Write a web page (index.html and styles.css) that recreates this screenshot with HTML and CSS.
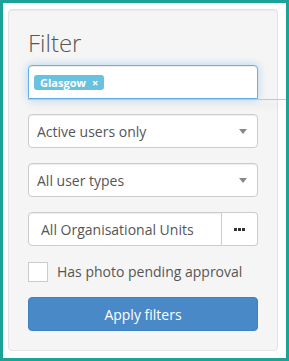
FILE: index.html
```html
<!DOCTYPE html>
<html lang="en">
<head>
    <meta charset="UTF-8">
    <meta name="viewport" content="width=device-width, initial-scale=1.0">
    <title>Filter</title>
    <link rel="stylesheet" href="styles.css">
</head>
<body>
    <div class="well">
        <h3 class="title">Filter</h3>
        <form class="filter-form">
            <div class="tag-input">
                <span class="tag">Glasgow <span class="tag-remove">&times;</span></span>
                <div class="tag-dropdown"></div>
            </div>
            <div class="select-wrap">
                <select class="field">
                    <option>Active users only</option>
                    <option>Inactive users only</option>
                </select>
            </div>
            <div class="select-wrap">
                <select class="field">
                    <option>All user types</option>
                </select>
            </div>
            <div class="input-group">
                <input class="field" type="text" value="All Organisational Units" readonly>
                <button type="button" class="btn-more">
                    <svg width="11" height="3" viewBox="0 0 11 3">
                        <rect x="0" y="0" width="3" height="3" fill="#333"/>
                        <rect x="4" y="0" width="3" height="3" fill="#333"/>
                        <rect x="8" y="0" width="3" height="3" fill="#333"/>
                    </svg>
                </button>
            </div>
            <label class="check">
                <input type="checkbox">
                <span>Has photo pending approval</span>
            </label>
            <button type="button" class="btn-apply">Apply filters</button>
        </form>
    </div>
</body>
</html>
```

FILE: styles.css
```css
* {
    box-sizing: border-box;
}
body {
    margin: 0;
    width: 289px;
    height: 361px;
    padding: 6px 5px 0 5px;
    border: 3px solid #1aa396;
    background-color: #FFFFFF;
    font-family: "Open Sans", Arial, sans-serif;
    font-size: 14px;
    color: #555555;
    overflow: hidden;
}
.well {
    width: 270px;
    padding: 19px;
    background-color: #f5f5f5;
    border: 1px solid #e3e3e3;
    border-radius: 4px;
    box-shadow: inset 0 1px 1px rgba(0, 0, 0, 0.05);
}
.title {
    margin: 0 0 9px 0;
    font-size: 24px;
    line-height: 27px;
    font-weight: 300;
    color: #555555;
}
.filter-form {
    display: flex;
    flex-direction: column;
    gap: 15px;
}
.tag-input {
    position: relative;
    height: 34px;
    padding: 6px 5px;
    background-color: #FFFFFF;
    border: 1px solid #66afe9;
    border-radius: 4px 4px 0 0;
    box-shadow: inset 0 1px 1px rgba(0, 0, 0, 0.075), 0 0 8px rgba(102, 175, 233, 0.5);
}
.tag {
    display: inline-flex;
    align-items: center;
    gap: 6px;
    height: 15px;
    padding: 0 6px 0 6px;
    background-color: #68c2df;
    border-radius: 3px;
    color: #FFFFFF;
    font-size: 11px;
    font-weight: 700;
}
.tag-remove {
    font-size: 11px;
}
.tag-dropdown {
    position: absolute;
    top: 33px;
    left: -1px;
    width: 262px;
    height: 1px;
    background-color: #c6c6c6;
    box-shadow: 0 5px 9px rgba(0, 0, 0, 0.18);
}
.select-wrap {
    position: relative;
}
.select-wrap::after {
    content: "";
    position: absolute;
    right: 11px;
    top: 15px;
    border-left: 4px solid transparent;
    border-right: 4px solid transparent;
    border-top: 5px solid #888888;
}
.field {
    display: block;
    width: 100%;
    height: 34px;
    padding: 0 12px;
    font-family: "Open Sans", Arial, sans-serif;
    font-size: 14px;
    color: #555555;
    background-color: #FFFFFF;
    border: 1px solid #cccccc;
    border-radius: 4px;
    box-shadow: inset 0 1px 1px rgba(0, 0, 0, 0.075);
    outline: none;
}
select.field {
    appearance: none;
    -webkit-appearance: none;
    padding-left: 8px;
}
.input-group {
    display: flex;
}
.input-group .field {
    flex: 1;
    border-radius: 4px 0 0 4px;
}
.btn-more {
    width: 36px;
    height: 34px;
    display: flex;
    align-items: center;
    justify-content: center;
    background-color: #FFFFFF;
    border: 1px solid #cccccc;
    border-left: none;
    border-radius: 0 4px 4px 0;
    padding: 0;
}
.check {
    display: flex;
    align-items: center;
    gap: 9px;
    height: 21px;
    color: #555555;
}
.check input {
    appearance: none;
    -webkit-appearance: none;
    margin: 0;
    width: 20px;
    height: 20px;
    background-color: #FFFFFF;
    border: 1px solid #cccccc;
}
.btn-apply {
    height: 34px;
    background-color: #4a89c8;
    border: 1px solid #4180bf;
    border-radius: 4px;
    color: #FFFFFF;
    font-family: "Open Sans", Arial, sans-serif;
    font-size: 14px;
}
```
